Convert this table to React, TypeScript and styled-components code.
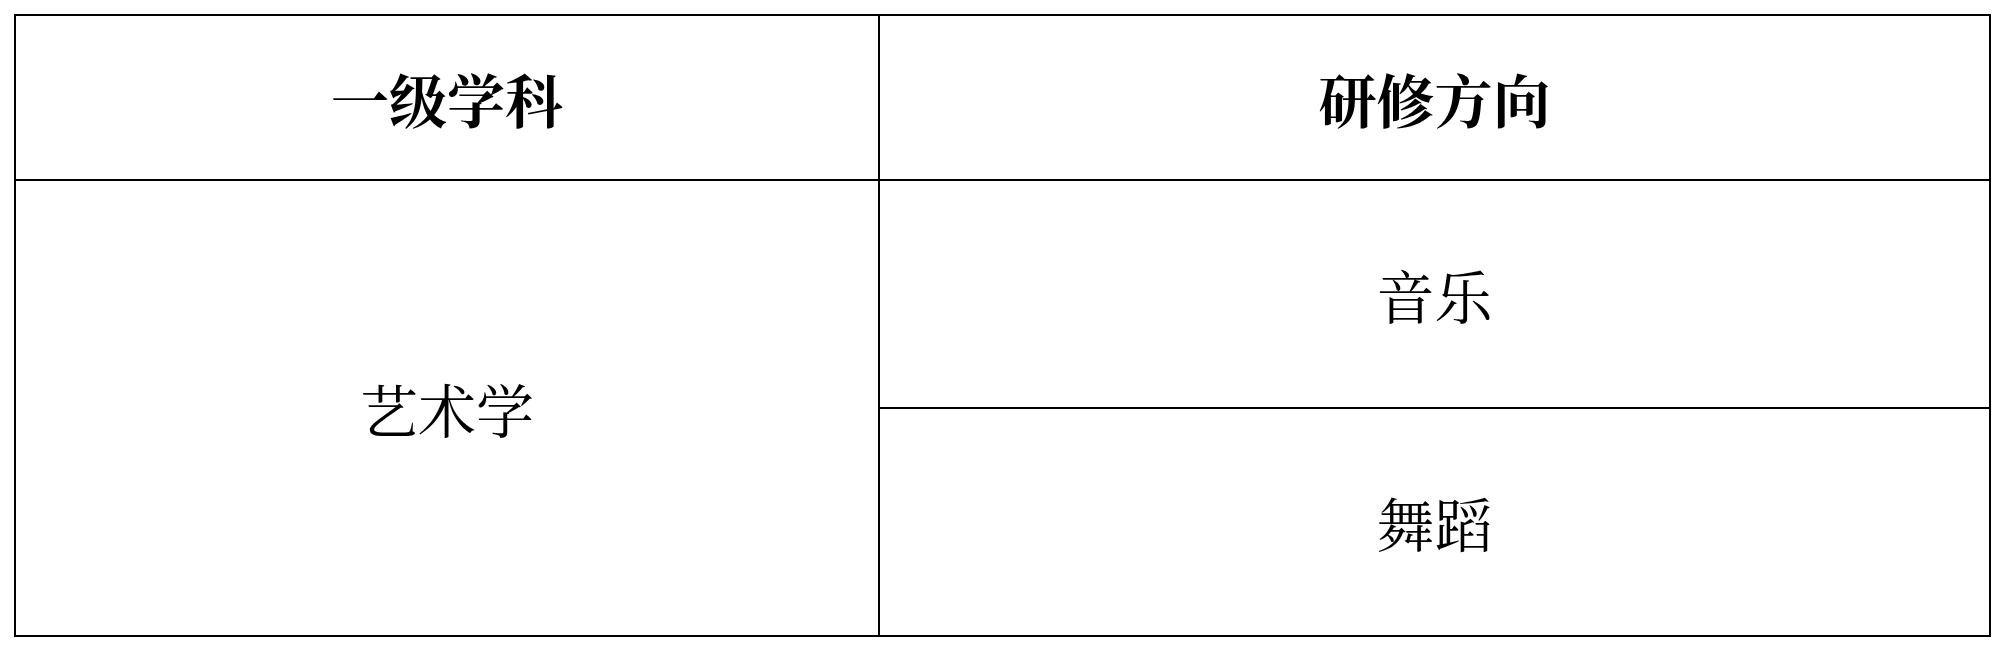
import React from "react";
import styled, { createGlobalStyle } from "styled-components";

const GlobalStyle = createGlobalStyle`
  html, body {
    margin: 0;
    padding: 0;
    background: #ffffff;
  }
`;

const Page = styled.div`
  padding: 14px;
  font-family: "Liberation Serif", "Noto Serif CJK SC", "Noto Sans CJK SC", serif;
  color: #000000;
`;

const Table = styled.table`
  width: 1977px;
  border-collapse: collapse;
  table-layout: fixed;
`;

const HeadCell = styled.th`
  height: 163px;
  border: 2px solid #000000;
  font-size: 58px;
  font-weight: bold;
  text-align: center;
  vertical-align: middle;
  padding: 0;
`;

interface CellProps {
  $height?: number;
}

const Cell = styled.td<CellProps>`
  height: ${({ $height }) => ($height ? `${$height}px` : "auto")};
  border: 2px solid #000000;
  font-size: 58px;
  font-weight: normal;
  text-align: center;
  vertical-align: middle;
  padding: 0;
`;

const App: React.FC = () => {
  return (
    <Page>
      <GlobalStyle />
      <Table>
        <colgroup>
          <col style={{ width: 864 }} />
          <col />
        </colgroup>
        <thead>
          <tr>
            <HeadCell>一级学科</HeadCell>
            <HeadCell>研修方向</HeadCell>
          </tr>
        </thead>
        <tbody>
          <tr>
            <Cell rowSpan={2}>艺术学</Cell>
            <Cell $height={226}>音乐</Cell>
          </tr>
          <tr>
            <Cell $height={226}>舞蹈</Cell>
          </tr>
        </tbody>
      </Table>
    </Page>
  );
};

export default App;
